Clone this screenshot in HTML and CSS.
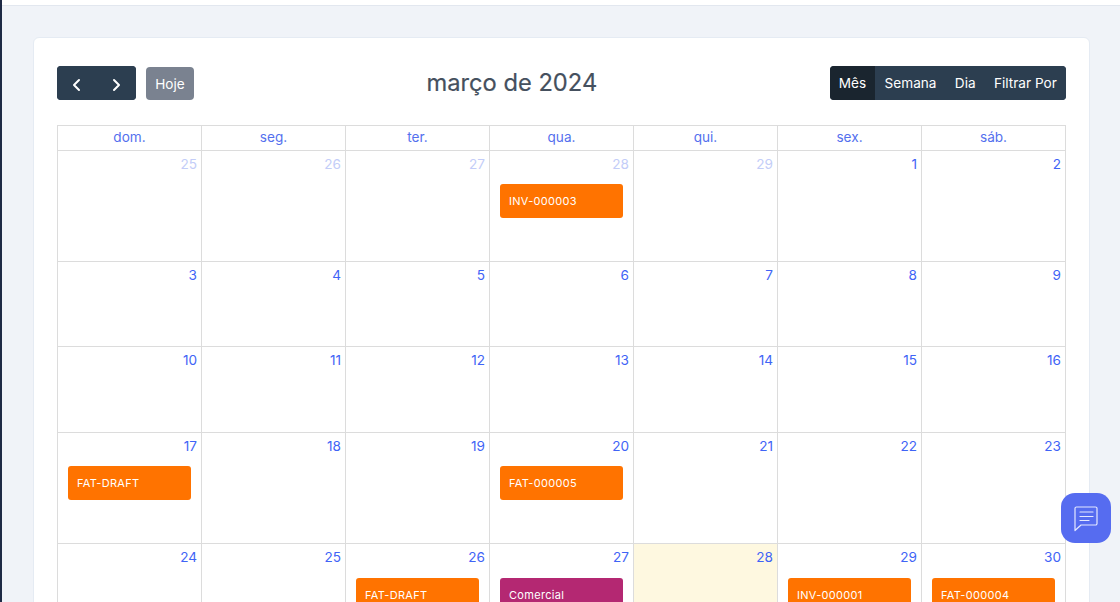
FILE: index.html
```html
<!DOCTYPE html>
<html lang="pt">
<head>
    <meta charset="UTF-8">
    <title>Calendário</title>
    <link rel="stylesheet" href="styles.css">
</head>
<body>
    <div class="topbar"></div>

    <main class="content">
        <section class="card">
            <div class="toolbar">
                <div class="toolbar-left">
                    <div class="btn-group">
                        <button class="btn btn-icon" type="button" aria-label="Anterior">
                            <svg width="16" height="16" viewBox="0 0 16 16" fill="none" stroke="currentColor" stroke-width="2" stroke-linecap="round" stroke-linejoin="round"><path d="M10 3 5 8l5 5"/></svg>
                        </button>
                        <button class="btn btn-icon" type="button" aria-label="Próximo">
                            <svg width="16" height="16" viewBox="0 0 16 16" fill="none" stroke="currentColor" stroke-width="2" stroke-linecap="round" stroke-linejoin="round"><path d="m6 3 5 5-5 5"/></svg>
                        </button>
                    </div>
                    <button class="btn btn-today" type="button">Hoje</button>
                </div>
                <h2 class="title">março de 2024</h2>
                <div class="btn-group">
                    <button class="btn btn-view active" type="button">Mês</button>
                    <button class="btn btn-view" type="button">Semana</button>
                    <button class="btn btn-view" type="button">Dia</button>
                    <button class="btn btn-view" type="button">Filtrar Por</button>
                </div>
            </div>

            <div class="calendar">
                <div class="head">dom.</div>
                <div class="head">seg.</div>
                <div class="head">ter.</div>
                <div class="head">qua.</div>
                <div class="head">qui.</div>
                <div class="head">sex.</div>
                <div class="head">sáb.</div>

                <div class="day muted"><span class="num">25</span></div>
                <div class="day muted"><span class="num">26</span></div>
                <div class="day muted"><span class="num">27</span></div>
                <div class="day muted"><span class="num">28</span><a class="event orange">INV-000003</a></div>
                <div class="day muted"><span class="num">29</span></div>
                <div class="day"><span class="num">1</span></div>
                <div class="day"><span class="num">2</span></div>

                <div class="day"><span class="num">3</span></div>
                <div class="day"><span class="num">4</span></div>
                <div class="day"><span class="num">5</span></div>
                <div class="day"><span class="num">6</span></div>
                <div class="day"><span class="num">7</span></div>
                <div class="day"><span class="num">8</span></div>
                <div class="day"><span class="num">9</span></div>

                <div class="day"><span class="num">10</span></div>
                <div class="day"><span class="num">11</span></div>
                <div class="day"><span class="num">12</span></div>
                <div class="day"><span class="num">13</span></div>
                <div class="day"><span class="num">14</span></div>
                <div class="day"><span class="num">15</span></div>
                <div class="day"><span class="num">16</span></div>

                <div class="day"><span class="num">17</span><a class="event orange">FAT-DRAFT</a></div>
                <div class="day"><span class="num">18</span></div>
                <div class="day"><span class="num">19</span></div>
                <div class="day"><span class="num">20</span><a class="event orange">FAT-000005</a></div>
                <div class="day"><span class="num">21</span></div>
                <div class="day"><span class="num">22</span></div>
                <div class="day"><span class="num">23</span></div>

                <div class="day"><span class="num">24</span></div>
                <div class="day"><span class="num">25</span></div>
                <div class="day"><span class="num">26</span><a class="event orange">FAT-DRAFT</a></div>
                <div class="day"><span class="num">27</span><a class="event purple">Comercial</a></div>
                <div class="day today"><span class="num">28</span></div>
                <div class="day"><span class="num">29</span><a class="event orange">INV-000001</a></div>
                <div class="day"><span class="num">30</span><a class="event orange">FAT-000004</a></div>
            </div>
        </section>
    </main>

    <button class="chat-button" type="button" aria-label="Chat">
        <svg width="28" height="28" viewBox="0 0 28 28" fill="none" stroke="currentColor" stroke-width="1.2" stroke-linecap="round" stroke-linejoin="round"><path d="M4.5 3h19a1.500 1.500 0 0 1 1.500 1.500v15a1.500 1.500 0 0 1-1.500 1.500H9L3 26.500V4.500A1.500 1.500 0 0 1 4.500 3Z"/><path d="M8 8h13M8 12.500h13M8 16.500h9"/></svg>
    </button>
</body>
</html>
```

FILE: styles.css
```css
/* --- General Setup --- */
:root {
    --navy: #2c3e50;
    --navy-dark: #1a252f;
    --blue: #3f64f6;
    --line: #dcdcdc;
}

html, body {
    height: 100%;
}

body {
    margin: 0;
    overflow: hidden;
    font-family: 'Inter', sans-serif;
    background-color: #f0f3f8;
    border-left: 2px solid #1e2a45;
}

/* --- Page Frame --- */
.topbar {
    height: 5px;
    background-color: #ffffff;
    border-bottom: 1px solid #e2e7ef;
}

.content {
    padding: 31px 30px 0 31px;
}

.card {
    background-color: #ffffff;
    border: 1px solid #e5ebf3;
    border-radius: 6px;
    padding: 28px 23px 0;
}

/* --- Toolbar --- */
.toolbar {
    display: flex;
    justify-content: space-between;
    align-items: center;
    height: 34px;
    margin-bottom: 25px;
}

.toolbar-left {
    display: flex;
    align-items: flex-end;
    gap: 10px;
    width: 137px;
}

.title {
    margin: 0 0 2px;
    font-size: 23.700px;
    font-weight: 400;
    color: #45505e;
    -webkit-text-stroke: 0.2px #45505e;
}

.btn {
    border: none;
    color: #ffffff;
    font-family: inherit;
    font-size: 13.6px;
    font-weight: 400;
    padding: 0;
    cursor: pointer;
}

.btn-group {
    display: flex;
    height: 34px;
    border-radius: 4px;
    overflow: hidden;
    background-color: var(--navy);
}

.btn-icon {
    display: flex;
    align-items: center;
    justify-content: center;
    width: 39.500px;
    padding-top: 3px;
    background-color: var(--navy);
}

.btn-today {
    width: 48px;
    height: 33px;
    border-radius: 4px;
    background-color: #7a8290;
}

.btn-view {
    padding: 0 9.200px;
    background-color: var(--navy);
}

.btn-view.active {
    background-color: var(--navy-dark);
}

/* --- Calendar Grid --- */
.calendar {
    display: grid;
    grid-template-columns: repeat(7, 144px);
    grid-template-rows: 25px 111px 85px 86px 111px 111px;
    border-top: 1px solid var(--line);
    border-left: 1px solid var(--line);
}

.head, .day {
    border-right: 1px solid var(--line);
    border-bottom: 1px solid var(--line);
}

.head {
    display: flex;
    align-items: center;
    justify-content: center;
    padding-bottom: 2px;
    font-size: 13.6px;
    color: #5470ee;
}

.day {
    display: flex;
    flex-direction: column;
    padding: 5px 4px 0 10px;
}

.num {
    align-self: flex-end;
    font-size: 13.6px;
    line-height: 17px;
    color: var(--blue);
}

.muted .num {
    color: #c3cdf8;
}

.today {
    background-color: #fef8e0;
}

/* --- Events --- */
.event {
    display: flex;
    align-items: center;
    flex: none;
    height: 34px;
    margin: 11px 6px 0 0;
    padding-left: 9px;
    border-radius: 3px;
    font-size: 11px;
    font-weight: 400;
    letter-spacing: 0.3px;
    color: #ffffff;
}

/* last week sits one pixel lower in its row */
.day:nth-last-child(-n+7) .event {
    margin-top: 12px;
}

.orange {
    background-color: #ff7300;
}

.purple {
    background-color: #b42872;
}

/* --- Chat Button --- */
.chat-button {
    position: fixed;
    left: 1061px;
    top: 493px;
    display: flex;
    align-items: center;
    justify-content: center;
    width: 50px;
    height: 50px;
    border: none;
    border-radius: 14px;
    padding: 0;
    color: #e4e8ff;
    background-color: #566cf0;
}
```
